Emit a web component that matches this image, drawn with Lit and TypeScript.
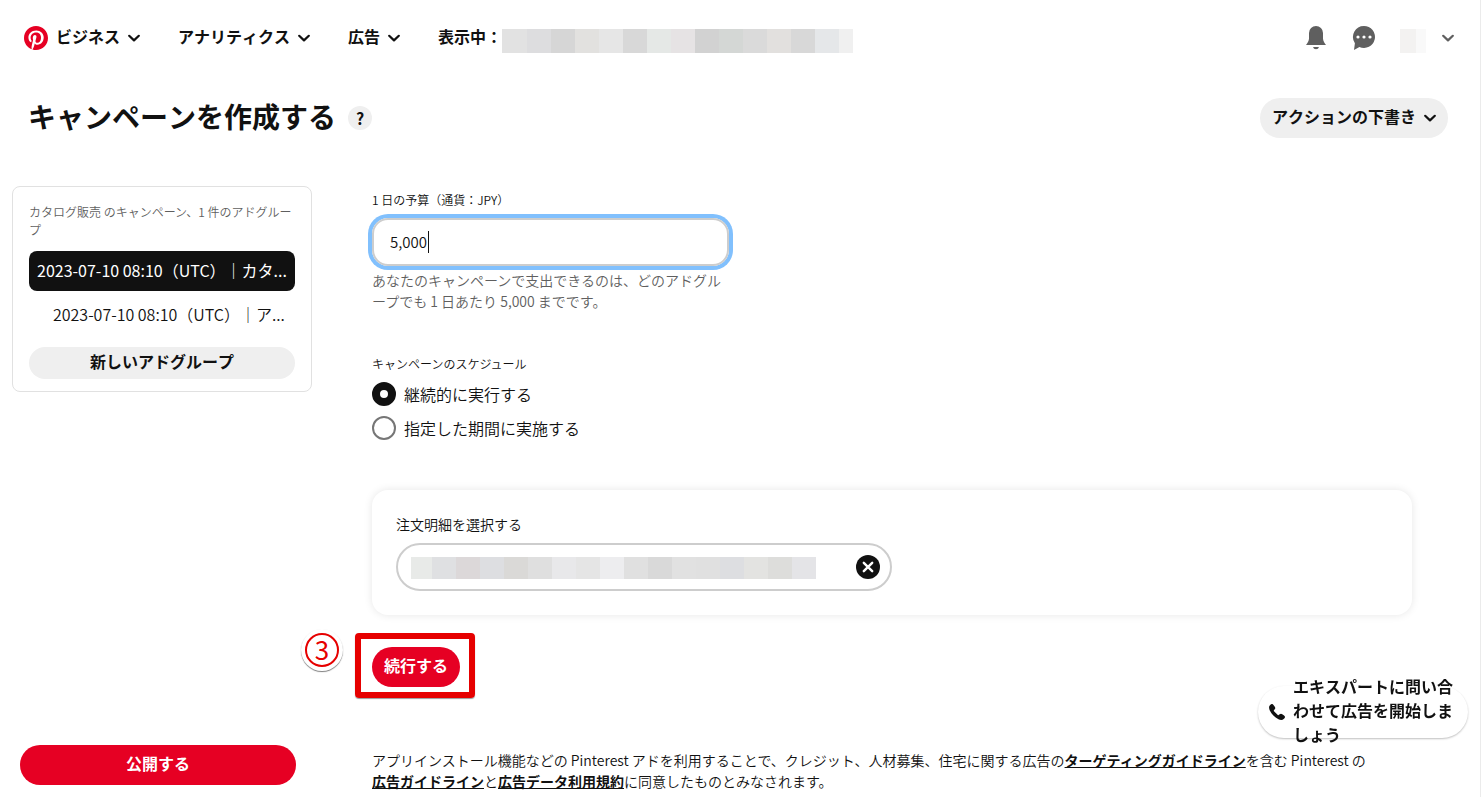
import { LitElement, html, css, svg } from "lit";
import { customElement, property, state } from "lit/decorators.js";
import { classMap } from "lit/directives/class-map.js";

const chevron = html`<svg class="chevron" viewBox="0 0 12 12" width="12" height="12" aria-hidden="true">
  <path d="M1.2 3.8 6 8.4l4.8-4.6" fill="none" stroke="currentColor" stroke-width="2.2" stroke-linecap="round" stroke-linejoin="round" />
</svg>`;

const pinterestLogo = html`<svg viewBox="0 0 24 24" width="24" height="24" role="img" aria-label="Pinterest">
  <circle cx="12" cy="12" r="11.5" fill="#fff" />
  <path fill="#e60023" d="M0 12c0 5.123 3.211 9.497 7.73 11.218-.11-.937-.227-2.482.025-3.566.217-.932 1.401-5.938 1.401-5.938s-.357-.715-.357-1.774c0-1.66.962-2.9 2.161-2.9 1.02 0 1.512.765 1.512 1.682 0 1.025-.653 2.557-.99 3.978-.281 1.189.597 2.159 1.769 2.159 2.123 0 3.756-2.239 3.756-5.471 0-2.861-2.056-4.86-4.991-4.86-3.398 0-5.393 2.549-5.393 5.184 0 1.027.395 2.127.889 2.726a.36.36 0 0 1 .083.343c-.091.378-.293 1.189-.332 1.355-.053.218-.173.265-.4.159-1.492-.694-2.424-2.875-2.424-4.627 0-3.769 2.737-7.229 7.892-7.229 4.144 0 7.365 2.953 7.365 6.899 0 4.117-2.595 7.431-6.199 7.431-1.211 0-2.348-.63-2.738-1.373 0 0-.599 2.282-.744 2.84-.282 1.084-1.064 2.456-1.549 3.235C9.584 23.815 10.77 24 12 24c6.627 0 12-5.373 12-12S18.627 0 12 0 0 5.373 0 12" />
</svg>`;

const bell = html`<svg viewBox="0 0 24 24" width="24" height="24" fill="#5f5f5f" aria-hidden="true">
  <path d="M5 7a7 7 0 0 1 14 0v5.7c.3 2.500 1.400 4.300 3 6.300H2c1.600-2 2.700-3.800 3-6.300zM9 21h6a3.100 3.100 0 0 1-6 0z" />
</svg>`;

const dots = [6, 12, 18].map((x) => svg`<circle cx=${x} cy="11" r="1.600" fill="#fff" />`);
const bubble = html`<svg viewBox="0 0 24 24" width="24" height="24" aria-hidden="true">
  <path fill="#5f5f5f" d="M12 0a11 11 0 1 1-4.600 21L2 24l.9-6.800A11 11 0 0 1 12 0z" />${dots}
</svg>`;

const phone = html`<svg viewBox="0 0 24 24" width="16" height="16" fill="#111" aria-hidden="true">
  <path d="M22.600 17.300l-2.700-2a3.200 3.200 0 0 0-3.900.100l-1.500 1.200a1 1 0 0 1-1.300-.1l-5.700-5.700a1 1 0 0 1-.1-1.300L8.600 8a3.200 3.200 0 0 0 .1-3.900L6.700 1.400a3 3 0 0 0-4.500-.3L1.400 2C-.8 4.200.200 7.600 1.200 9.800c3 6 7 10 13 13 2.200 1 5.600 2 7.800-.200l.9-.8a3 3 0 0 0-.3-4.500z" />
</svg>`;

const cross = html`<svg viewBox="0 0 24 24" width="24" height="24" aria-hidden="true">
  <circle cx="12" cy="12" r="12" fill="#111" />
  <path d="M7.800 7.800l8.400 8.400M16.200 7.800l-8.400 8.400" stroke="#fff" stroke-width="2.400" stroke-linecap="round" />
</svg>`;

const accountBlocks = [
  "#e2e2e2", "#dddddf", "#d6d6d6", "#e2e1df", "#e6e6e6", "#d8d8d8", "#e5e8e6", "#e6e3e4",
  "#d2d2d2", "#d4d7d5", "#dadada", "#e2e0de", "#d8d8d8", "#e5e7e9", "#f0f0f0",
];
const orderBlocks = [
  "#e8eae8", "#dfe0e2", "#dcd8d9", "#dddee1", "#dad9d7", "#dfdfdf", "#e8e8ea", "#e5e5e5", "#ededef",
  "#e0e0e0", "#d9d9d9", "#e1e1e1", "#e0e0e0", "#dddee1", "#e3e3e1", "#dddddb", "#e4e4e7",
];

/** A row of flat tiles that stands in for a masked value. */
@customElement("masked-value")
class MaskedValue extends LitElement {
  @property({ attribute: false }) blocks: string[] = [];

  static styles = css`
    :host { display: flex; overflow: hidden; }
    .tile { flex: 0 0 24px; }
    .tile:first-child { flex-basis: var(--lead, 24px); }
    .tile:last-child { flex: 1 1 0; }
  `;

  render() {
    return this.blocks.map((c) => html`<span class="tile" style="background:${c}"></span>`);
  }
}

@customElement("app-root")
export class AppRoot extends LitElement {
  @state() private schedule = "continuous";

  static styles = css`
    :host {
      display: block;
      font-family: "Noto Sans CJK JP", "Noto Sans", sans-serif;
      font-size: 16px;
      font-weight: 350;
      line-height: 24px;
      color: #111;
      background: #fff;
    }
    * { box-sizing: border-box; }
    button, input { font: inherit; color: inherit; }
    button { border: 0; padding: 0; background: none; cursor: pointer; }
    svg { display: block; flex: none; }
    p, h1, fieldset, legend { margin: 0; padding: 0; border: 0; }
    a { color: inherit; font-weight: 700; text-decoration: underline; }

    .page {
      display: flex;
      flex-direction: column;
      min-height: 100vh;
      border-right: 1px solid #ebebeb;
    }
    .caption { font-weight: 700; font-kerning: none; padding-bottom: 4px; }

    .topbar { display: flex; align-items: center; height: 76px; padding: 0 26px 0 24px; }
    .nav { display: flex; align-items: center; gap: 38px; }
    .nav-item { display: flex; align-items: center; gap: 8px; }
    .viewing { display: flex; align-items: center; }
    .account { --lead: 25px; width: 351px; height: 24px; margin-top: 6px; }
    .tools { display: flex; align-items: center; gap: 24px; margin-left: auto; color: #5f5f5f; }
    .profile { display: flex; align-items: center; gap: 16px; }
    .avatar { --lead: 16px; width: 26px; height: 24px; margin-top: 6px; }

    .heading { display: flex; align-items: center; gap: 12px; padding: 22px 32px 0 28px; }
    .title { font-size: 28px; line-height: 36px; }
    .help {
      width: 24px; height: 24px; border-radius: 50%;
      background: #efefef; font-weight: 700; line-height: 24px;
    }
    .drafts {
      display: flex; align-items: center; gap: 8px; height: 40px; padding: 0 12px;
      margin-left: auto; border-radius: 20px; background: #efefef;
    }

    .body { display: flex; flex: 1; gap: 60px; padding: 48px 68px 5px 12px; }
    .side { display: flex; flex-direction: column; justify-content: space-between; flex: 0 0 300px; }
    .tree {
      display: flex; flex-direction: column; gap: 12px;
      padding: 16px 16px 12px; border: 1px solid #e1e1e1; border-radius: 8px;
    }
    .summary { font-size: 12px; line-height: 18px; color: #5f5f5f; line-break: loose; }
    .groups { display: flex; flex-direction: column; gap: 4px; }
    .group {
      height: 40px; padding: 0 8px 2px; border-radius: 8px;
      text-align: left; white-space: nowrap; overflow: hidden;
    }
    .group.child { padding-left: 24px; }
    .group.current { background: #111; color: #fff; font-weight: 400; }
    .new-group { height: 32px; border-radius: 16px; background: #efefef; }
    .primary { height: 40px; border-radius: 20px; background: #e60023; color: #fff; }
    .publish { margin: 0 16px 7px 8px; }

    .form { display: flex; flex-direction: column; flex: 1; min-width: 0; }
    .label { display: block; font-size: 12px; line-height: 18px; }
    .budget { max-width: 357px; padding-top: 5px; }
    .budget-box {
      display: flex; align-items: center; height: 48px; margin: 9px 0 4px; padding: 0 16px;
      border: 2px solid #cdcdcd; border-radius: 16px; box-shadow: 0 0 0 4px #81c0fd;
      font-size: 15px;
    }
    .budget-input {
      width: 39px; field-sizing: content; height: 22px; padding: 0;
      border: 0; border-right: 1px solid #111; outline: 0; background: none;
    }
    .hint { font-size: 14px; line-height: 21px; color: #5f5f5f; line-break: loose; }

    .schedule { margin-top: 43px; }
    .options { display: flex; flex-direction: column; gap: 10px; padding-top: 9px; }
    .option { display: flex; align-items: center; gap: 8px; }
    .radio {
      appearance: none; flex: none; width: 24px; height: 24px; margin: 0;
      border: 2px solid #767676; border-radius: 50%; background: #fff;
    }
    .radio:checked { border: 8px solid #111; }

    .card {
      margin-top: 50px; padding: 24px; border-radius: 16px;
      box-shadow: 0 0 8px rgba(0, 0, 0, 0.1);
    }
    .card-label { display: block; font-size: 14px; line-height: 21px; }
    .order-box {
      display: flex; align-items: center; gap: 16px; max-width: 496px; height: 48px;
      margin-top: 8px; padding: 0 10px 0 13px; border: 2px solid #cdcdcd; border-radius: 24px;
    }
    .order-value { display: grid; align-items: center; flex: 1; }
    .order-value > * { grid-area: 1 / 1; }
    .order-input { width: 100%; height: 40px; padding: 0; border: 0; outline: 0; background: none; }
    .order-mask { --lead: 21px; width: 405px; height: 22px; margin-top: 2px; }

    .actions { display: flex; padding-top: 32px; }
    .step { position: relative; }
    .continue { display: block; width: 88px; }
    .frame {
      position: absolute; inset: -14px -15px -11px -17px; pointer-events: none;
      border: 6px solid #e60000; border-radius: 4px; box-shadow: 0 1px 1px rgba(0, 0, 0, 0.4);
    }
    .marker {
      position: absolute; left: -71px; top: -18px; width: 42px; height: 42px; padding: 4px;
      border-radius: 50%; background: #fff; box-shadow: 0 1px 1px rgba(0, 0, 0, 0.5);
    }
    .number {
      display: block; height: 34px; border: 2px solid #e60000; border-radius: 50%;
      color: #e60000; font-size: 26px; font-weight: 400; line-height: 28px; text-align: center;
    }
    .terms { max-width: 1000px; margin-top: auto; padding-top: 63px; font-size: 14px; line-height: 21px; }

    .expert {
      position: fixed; right: 13px; bottom: 59px; display: flex; align-items: center; gap: 8px;
      width: 210px; height: 52px; padding: 0 11px; border-radius: 26px;
      background: #fff; box-shadow: 0 1px 2px rgba(0, 0, 0, 0.25);
      text-align: left;
    }
  `;

  private option(value: string, text: string) {
    return html`<label class="option">
      <input class="radio" type="radio" name="schedule" value=${value}
        .checked=${this.schedule === value} @change=${() => (this.schedule = value)} />
      ${text}
    </label>`;
  }

  private group(text: string, child: boolean) {
    return html`<button class=${classMap({ group: true, child, current: !child })}>${text}</button>`;
  }

  render() {
    return html`<div class="page" lang="ja">
      <header class="topbar">
        <nav class="nav">
          <button class="nav-item">${pinterestLogo}<span class="caption">ビジネス</span>${chevron}</button>
          <button class="nav-item"><span class="caption">アナリティクス</span>${chevron}</button>
          <button class="nav-item"><span class="caption">広告</span>${chevron}</button>
          <div class="viewing">
            <span class="caption">表示中：</span><masked-value class="account" .blocks=${accountBlocks}></masked-value>
          </div>
        </nav>
        <div class="tools">
          <button aria-label="通知">${bell}</button>
          <button aria-label="メッセージ">${bubble}</button>
          <button class="profile" aria-label="アカウント">
            <masked-value class="avatar" .blocks=${["#f3f2f1", "#f9f9f9"]}></masked-value>${chevron}
          </button>
        </div>
      </header>

      <div class="heading">
        <h1 class="title caption">キャンペーンを作成する</h1>
        <button class="help" aria-label="ヘルプ">?</button>
        <button class="drafts"><span class="caption">アクションの下書き</span>${chevron}</button>
      </div>

      <div class="body">
        <aside class="side">
          <div class="tree">
            <p class="summary">カタログ販売 のキャンペーン、1 件のアドグループ</p>
            <div class="groups">
              ${this.group("2023-07-10 08:10（UTC）｜カタ...", false)}
              ${this.group("2023-07-10 08:10（UTC）｜ア...", true)}
            </div>
            <button class="new-group caption">新しいアドグループ</button>
          </div>
          <button class="primary publish caption">公開する</button>
        </aside>

        <main class="form">
          <div class="budget">
            <label class="label" for="budget">1 日の予算（通貨：JPY）</label>
            <div class="budget-box"><input class="budget-input" id="budget" type="text" value="5,000" /></div>
            <p class="hint">あなたのキャンペーンで支出できるのは、どのアドグループでも 1 日あたり 5,000 までです。</p>
          </div>

          <fieldset class="schedule">
            <legend class="label">キャンペーンのスケジュール</legend>
            <div class="options">
              ${this.option("continuous", "継続的に実行する")}
              ${this.option("period", "指定した期間に実施する")}
            </div>
          </fieldset>

          <section class="card">
            <label class="card-label" for="order">注文明細を選択する</label>
            <div class="order-box">
              <div class="order-value">
                <input class="order-input" id="order" type="text" />
                <masked-value class="order-mask" .blocks=${orderBlocks}></masked-value>
              </div>
              <button aria-label="クリア">${cross}</button>
            </div>
          </section>

          <div class="actions">
            <div class="step">
              <button class="primary continue caption">続行する</button>
              <span class="frame"></span>
              <span class="marker"><span class="number">3</span></span>
            </div>
          </div>

          <p class="terms">アプリインストール機能などの Pinterest アドを利用することで、クレジット、人材募集、住宅に関する広告の<a href="#targeting">ターゲティングガイドライン</a>を含む Pinterest の<a href="#guidelines">広告ガイドライン</a>と<a href="#data">広告データ利用規約</a>に同意したものとみなされます。</p>
        </main>
      </div>

      <button class="expert">${phone}<span class="caption">エキスパートに問い合わせて広告を開始しましょう</span></button>
    </div>`;
  }
}
